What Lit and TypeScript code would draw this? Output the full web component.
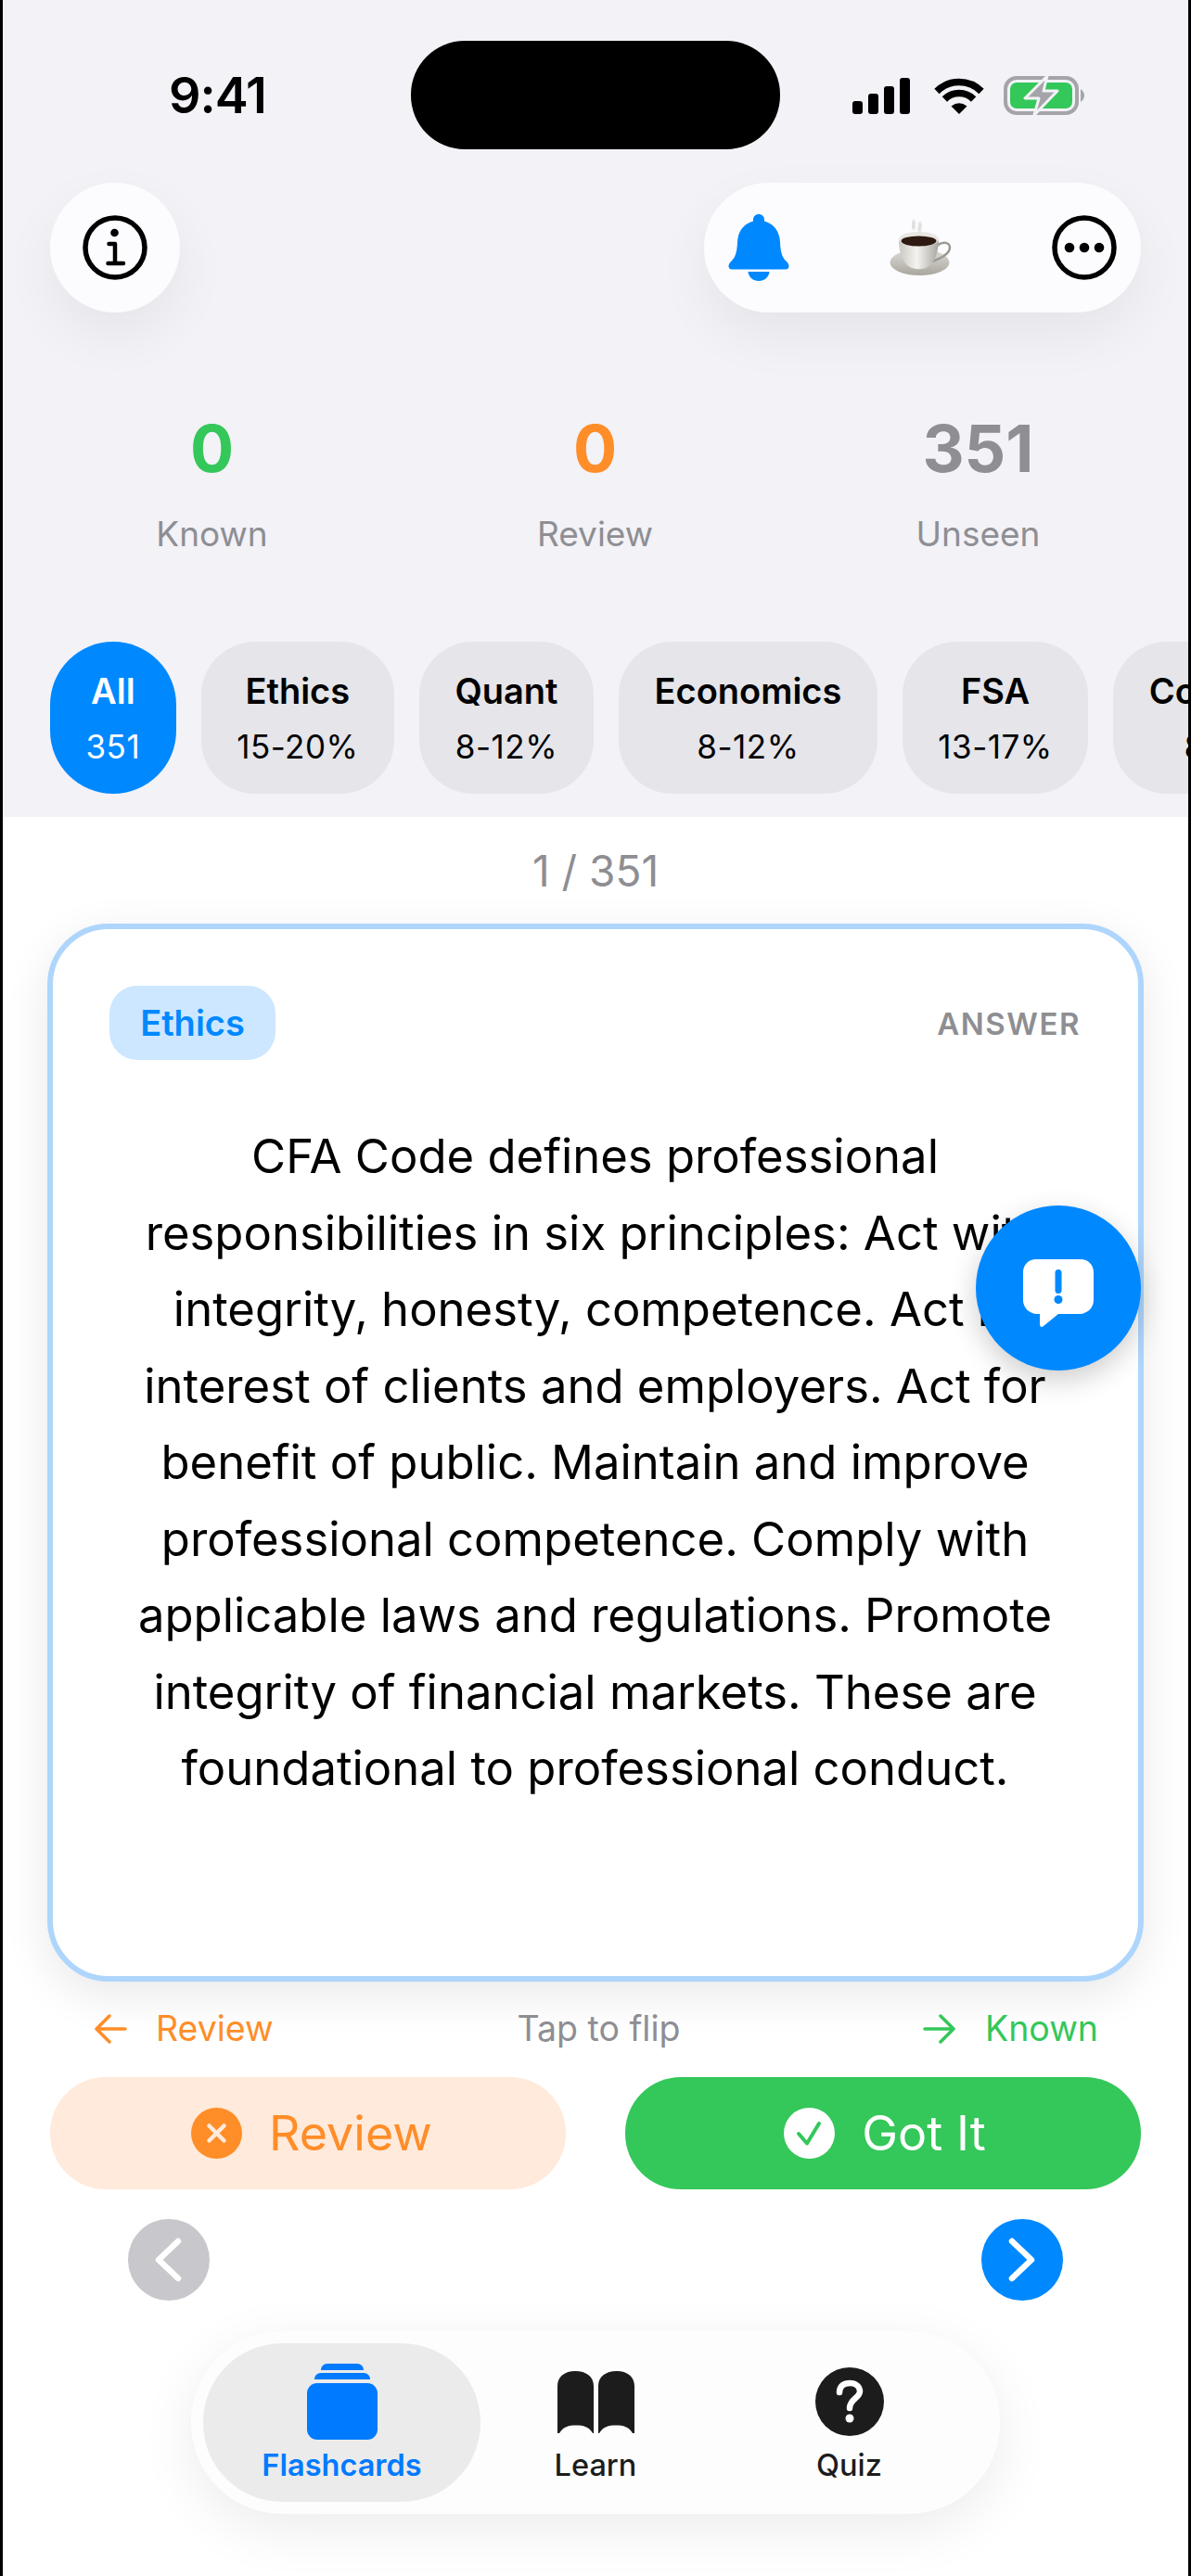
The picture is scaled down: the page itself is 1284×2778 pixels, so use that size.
import {LitElement, html, css, svg} from 'lit';
import {customElement} from 'lit/decorators.js';

const CHIPS = [
    {title: 'All', sub: '351', active: true},
    {title: 'Ethics', sub: '15-20%'},
    {title: 'Quant', sub: '8-12%'},
    {title: 'Economics', sub: '8-12%'},
    {title: 'FSA', sub: '13-17%'},
    {title: 'Corporate', sub: '8-12%'},
];

const STATS = [
    {value: '0', label: 'Known', tone: 'green'},
    {value: '0', label: 'Review', tone: 'orange'},
    {value: '351', label: 'Unseen', tone: 'gray'},
];

// the answer text wraps at fixed places in the reference
const ANSWER_LINES = [
    'CFA Code defines professional',
    'responsibilities in six principles: Act with',
    'integrity, honesty, competence. Act in',
    'interest of clients and employers. Act for',
    'benefit of public. Maintain and improve',
    'professional competence. Comply with',
    'applicable laws and regulations. Promote',
    'integrity of financial markets. These are',
    'foundational to professional conduct.',
];

const signalIcon = html`<svg width="62" height="40" viewBox="0 0 62 40">
    <rect x="0" y="26" width="11" height="14" rx="3"/>
    <rect x="17" y="18" width="11" height="22" rx="3"/>
    <rect x="34" y="10" width="11" height="30" rx="3"/>
    <rect x="51" y="1" width="11" height="39" rx="3"/>
</svg>`;

const wifiIcon = html`<svg class="wifi" width="54" height="40" viewBox="0 0 54 40">
    <path d="M3 15.500A34 34 0 0 1 51 15.500" fill="none" stroke="#000" stroke-width="7.500"/>
    <path d="M11.400 24A22 22 0 0 1 42.600 24" fill="none" stroke="#000" stroke-width="7.500"/>
    <path d="M27 40L18.500 31.500Q27 25 35.500 31.500Z"/>
</svg>`;

const batteryIcon = html`<svg width="88" height="44" viewBox="0 0 88 44">
    <rect x="2" y="3" width="77" height="38" rx="12" fill="none" stroke="#a4a4a9" stroke-width="4"/>
    <path d="M83 15Q87 18 87 22Q87 26 83 29Z" fill="#a4a4a9"/>
    <rect x="7" y="8" width="67" height="28" rx="7" fill="#34c759"/>
    <path d="M47 1L23 25H38L33 43L58 17H43Z" fill="#a4a4a9" stroke="#f2f2f7" stroke-width="3" stroke-linejoin="round"/>
</svg>`;

const infoIcon = html`<svg width="70" height="70" viewBox="0 0 70 70">
    <circle cx="35" cy="35" r="32" fill="none" stroke="#000" stroke-width="5.500"/>
    <circle cx="34.500" cy="19" r="4.300"/>
    <path d="M28.500 31H35V52M27.500 52H44" fill="none" stroke="#000" stroke-width="4.500" stroke-linecap="round" stroke-linejoin="round"/>
</svg>`;

const bellIcon = html`<svg width="66" height="72" viewBox="0 0 65 72" fill="#0088ff">
    <path d="M32.500 0C29 0 26.500 2.500 26.500 6V7.500C15 10.500 10 20 9.500 30C9 42 7 47 2.500 51C.5 53 0 55 0 56C0 58.500 1.500 59.500 4 59.500H61C63.500 59.500 65 58.500 65 56C65 55 64.500 53 62.500 51C58 47 56 42 55.500 30C55 20 50 10.500 38.500 7.500V6C38.500 2.500 36 0 32.500 0Z"/>
    <path d="M21 62H44C43.500 68 38.500 72 32.500 72C26.500 72 21.500 68 21 62Z"/>
</svg>`;

const coffeeIcon = html`<svg width="70" height="64" viewBox="0 0 70 64">
    <defs>
        <linearGradient id="saucer" x1="0" y1="0" x2="0" y2="1">
            <stop offset="0" stop-color="#dedcd6"/>
            <stop offset="1" stop-color="#a9a69e"/>
        </linearGradient>
        <linearGradient id="cup" x1="0" y1="0" x2="1" y2="0">
            <stop offset="0" stop-color="#c9c7c1"/>
            <stop offset=".45" stop-color="#f4f3ef"/>
            <stop offset="1" stop-color="#a8a69f"/>
        </linearGradient>
        <filter id="steam"><feGaussianBlur stdDeviation="1"/></filter>
    </defs>
    <ellipse cx="33.500" cy="48" rx="32" ry="14" fill="url(#saucer)"/>
    <path d="M52 30C58 25 66 26 66 32C66 38 58 43 47 47" fill="none" stroke="#9a9891" stroke-width="2.500"/>
    <path d="M11 23C11 38 16 52 27 54.500C31 55.500 37 55.500 41 53.500C49 50 54 38 54 23Z" fill="url(#cup)"/>
    <ellipse cx="32.500" cy="23" rx="21.500" ry="8" fill="#e9e7e2"/>
    <ellipse cx="32.500" cy="25" rx="19" ry="5.500" fill="#2e1a10"/>
    <path d="M26 3C30 6 23 9 28 12M33 5C37 8 31 11 34 15" fill="none" stroke="#cfcfcf" stroke-width="2.500" filter="url(#steam)"/>
</svg>`;

const moreIcon = html`<svg width="70" height="70" viewBox="0 0 70 70">
    <circle cx="35" cy="35" r="32" fill="none" stroke="#000" stroke-width="5.500"/>
    <circle cx="19" cy="35" r="5.300"/>
    <circle cx="35" cy="35" r="5.300"/>
    <circle cx="51" cy="35" r="5.300"/>
</svg>`;

const bubbleIcon = html`<svg width="76" height="74" viewBox="0 0 76 74">
    <path d="M14 0H62C70 0 76 6 76 14V44C76 52 70 58 62 59H38L22 72C20 74 18 73 18 70V59H14C6 58 0 52 0 44V14C0 6 6 0 14 0Z" fill="#fff"/>
    <rect x="34.500" y="11" width="7" height="26" rx="3.500" fill="#0088ff"/>
    <circle cx="38" cy="43.500" r="4.500" fill="#0088ff"/>
</svg>`;

const arrowIcon = (flip: boolean) => html`<svg class=${flip ? 'flip' : ''} width="36" height="32" viewBox="0 0 36 32">
    <path d="M34 16H3M17 2L3 16L17 30" fill="none" stroke="currentColor" stroke-width="3.500" stroke-linecap="round" stroke-linejoin="round"/>
</svg>`;

const crossIcon = html`<svg width="55" height="55" viewBox="0 0 55 55">
    <circle cx="27.500" cy="27.500" r="27.500" fill="#ff8d28"/>
    <path d="M19.500 19.500L35.500 35.500M35.500 19.500L19.500 35.500" stroke="#ffeadb" stroke-width="4.500" stroke-linecap="round"/>
</svg>`;

const checkIcon = html`<svg width="55" height="55" viewBox="0 0 55 55">
    <circle cx="27.500" cy="27.500" r="27.500" fill="#fff"/>
    <path d="M16 28L25 38.500L38 17" fill="none" stroke="#34c759" stroke-width="4" stroke-linecap="round" stroke-linejoin="round"/>
</svg>`;

const chevron = (right: boolean) => svg`<svg width="88" height="88" viewBox="0 0 88 88">
    <path d=${right ? 'M33 24L54 44L33 64' : 'M54 24L33 44L54 64'} fill="none" stroke="#fff" stroke-width="6.500" stroke-linecap="round" stroke-linejoin="round"/>
</svg>`;

const cardsIcon = html`<svg width="76" height="82" viewBox="0 0 76 82" fill="#007aff">
    <path d="M15 7C15 3 18 0 22 0H54C58 0 61 3 61 7H15Z"/>
    <path d="M8 17C8 13 11 10 15 10H61C65 10 68 13 68 17H8Z"/>
    <rect x="0" y="21" width="76" height="61" rx="11"/>
</svg>`;

const bookIcon = html`<svg width="83" height="67" viewBox="0 0 83 67" fill="#1c1c1c">
    <path d="M0 16C0 6 8 0 19 0C31 0 39 6 39 16V67H38C34 60 28 58.500 20 58.500C12 58.500 6 60 2 67H0Z"/>
    <path d="M83 16C83 6 75 0 64 0C52 0 44 6 44 16V67H45C49 60 55 58.500 63 58.500C71 58.500 77 60 81 67H83Z"/>
</svg>`;

const quizIcon = html`<svg width="74" height="74" viewBox="0 0 74 74">
    <circle cx="37" cy="37" r="37" fill="#1c1c1c"/>
    <path d="M26 27C26 20 31 17 37 17C44 17 48 21 48 26C48 33 37 34 37 44" fill="none" stroke="#fff" stroke-width="6.500" stroke-linecap="round"/>
    <circle cx="37" cy="55" r="4.500" fill="#fff"/>
</svg>`;

@customElement('app-root')
export class AppRoot extends LitElement {
    static styles = css`
        :host {
            display: block;
            width: 1284px;
            height: 2778px;
            background: #fff;
            font-family: Inter, "Liberation Sans", sans-serif;
            color: #000;
        }

        .screen {
            position: relative;
            box-sizing: border-box;
            width: 100%;
            height: 100%;
            border-left: 3px solid #000;
            border-right: 3px solid #000;
            overflow: hidden;
        }

        svg {
            display: block;
            flex: none;
        }

        .flip {
            transform: scaleX(-1);
        }

        /* top grey area */
        .head {
            background: #f2f2f7;
            padding: 44px 0 25px;
        }

        .status {
            display: grid;
            grid-template-columns: 440px 398px 1fr;
            height: 117px;
            align-items: center;
        }

        .time {
            padding-left: 179px;
            font-size: 54px;
            font-weight: 600;
            letter-spacing: -1px;
        }

        .island {
            height: 117px;
            border-radius: 58px;
            background: #000;
        }

        .status-icons {
            display: flex;
            align-items: center;
            padding-left: 78px;
            gap: 24px;
        }

        .wifi {
            margin: 0 -3px 0 2px;
        }

        .toolbar {
            display: flex;
            justify-content: space-between;
            margin-top: 36px;
            padding: 0 51px;
        }

        .round,
        .pill {
            height: 140px;
            background: #fcfcfe;
            border-radius: 70px;
            box-shadow: 0 24px 60px rgba(0, 0, 0, 0.06);
        }

        .round {
            width: 140px;
            display: flex;
            align-items: center;
            justify-content: center;
        }

        .pill {
            width: 471px;
            box-sizing: border-box;
            display: flex;
            align-items: center;
            justify-content: space-between;
            padding: 0 26px;
        }

        .stats {
            display: grid;
            grid-template-columns: repeat(3, 413px);
            margin-top: 112px;
            padding-left: 19px;
            text-align: center;
        }

        .stat-value {
            font-size: 70px;
            line-height: 70px;
            font-weight: 700;
        }

        .stat-label {
            margin-top: 34px;
            font-size: 37px;
            line-height: 46px;
            color: #8e8e93;
        }

        .green { color: #34c759; }
        .orange { color: #ff8d28; }
        .gray { color: #8e8e93; }

        .chips {
            display: flex;
            gap: 27px;
            margin-top: 93px;
            padding-left: 51px;
            overflow: hidden;
        }

        .chip {
            flex: none;
            height: 164px;
            box-sizing: border-box;
            padding: 0 38.500px;
            border-radius: 58px;
            background: #e5e5ea;
            display: flex;
            flex-direction: column;
            align-items: center;
            justify-content: center;
            gap: 18px;
        }

        .chip.active {
            background: #0088ff;
            color: #fff;
            border-radius: 68px;
        }

        .chip-title {
            font-size: 38px;
            line-height: 44px;
            font-weight: 600;
        }

        .chip-sub {
            font-size: 35px;
            line-height: 40px;
            letter-spacing: 0.5px;
        }

        /* card area */
        .counter {
            height: 115px;
            display: flex;
            align-items: center;
            justify-content: center;
            font-size: 46px;
            color: #8e8e93;
        }

        .card {
            box-sizing: border-box;
            margin: 0 48px;
            height: 1141px;
            padding: 61px 62px 0 61px;
            background: #fff;
            border: 6px solid #aed6fc;
            border-radius: 66px;
            box-shadow: 0 14px 50px rgba(0, 0, 0, 0.09);
        }

        .card-top {
            display: flex;
            justify-content: space-between;
            align-items: center;
        }

        .tag {
            height: 80px;
            width: 179px;
            display: flex;
            align-items: center;
            justify-content: center;
            border-radius: 30px;
            background: #cce7ff;
            color: #0088ff;
            font-size: 38px;
            font-weight: 600;
        }

        .side {
            font-size: 33px;
            font-weight: 600;
            letter-spacing: 1.5px;
            color: #8e8e93;
            padding-top: 2px;
        }

        .answer {
            margin: 63px 0 0 0;
            text-align: center;
            font-size: 50.800px;
            line-height: 82.5px;
        }

        .answer span {
            display: block;
            white-space: nowrap;
        }

        .hints {
            display: grid;
            grid-template-columns: 1fr auto 1fr;
            align-items: center;
            height: 103px;
            padding: 0 97px 2px 98px;
            box-sizing: border-box;
            font-size: 37.500px;
        }

        .hint {
            display: flex;
            align-items: center;
            gap: 31px;
        }

        .hint.right {
            justify-content: flex-end;
        }

        .tap {
            color: #8e8e93;
            padding-left: 6px;
        }

        .actions {
            display: grid;
            grid-template-columns: 556px 556px;
            gap: 64px;
            padding: 0 51px;
        }

        .action {
            height: 121px;
            box-sizing: border-box;
            border-radius: 60px;
            display: flex;
            align-items: center;
            justify-content: center;
            gap: 29px;
            font-size: 52px;
        }

        .action.later {
            background: #ffeadb;
            color: #ff8d28;
            padding-left: 8px;
        }

        .action.got {
            background: #34c759;
            color: #fff;
            padding-left: 4px;
        }

        .pager {
            display: flex;
            justify-content: space-between;
            margin-top: 32px;
            padding: 0 135px;
        }

        .page-btn {
            width: 88px;
            height: 88px;
            border-radius: 50%;
            background: #0088ff;
        }

        .page-btn.off {
            background: #c7c7cc;
        }

        /* bottom tabs */
        .tabbar {
            display: grid;
            grid-template-columns: 299px 248px 299px;
            width: 872px;
            box-sizing: border-box;
            height: 197px;
            margin: 33px auto 0;
            padding: 13px;
            background: #fdfdfd;
            border-radius: 98px;
            box-shadow: 0 16px 60px rgba(0, 0, 0, 0.08);
        }

        .tab {
            display: flex;
            flex-direction: column;
            align-items: center;
            color: #1c1c1c;
            font-size: 32.500px;
            line-height: 38px;
            font-weight: 500;
        }

        .tab.active {
            color: #007aff;
            font-weight: 600;
            background: #ebebeb;
            border-radius: 85px;
        }

        .tab-icon {
            height: 113px;
            box-sizing: border-box;
            padding-top: 13px;
            display: flex;
            align-items: center;
        }

        /* floating report button */
        .fab {
            position: absolute;
            left: 1049px;
            top: 1300px;
            width: 178px;
            height: 178px;
            border-radius: 50%;
            background: #0088ff;
            box-shadow: 0 10px 30px rgba(0, 0, 0, 0.2);
            display: flex;
            align-items: center;
            justify-content: center;
            padding-top: 12px;
            box-sizing: border-box;
        }
    `;

    render() {
        return html`
            <div class="screen">
                <div class="head">
                    <div class="status">
                        <div class="time">9:41</div>
                        <div class="island"></div>
                        <div class="status-icons">${signalIcon}${wifiIcon}${batteryIcon}</div>
                    </div>
                    <div class="toolbar">
                        <div class="round">${infoIcon}</div>
                        <div class="pill">${bellIcon}${coffeeIcon}${moreIcon}</div>
                    </div>
                    <div class="stats">
                        ${STATS.map((s) => html`
                            <div>
                                <div class="stat-value ${s.tone}">${s.value}</div>
                                <div class="stat-label">${s.label}</div>
                            </div>
                        `)}
                    </div>
                    <div class="chips">
                        ${CHIPS.map((c) => html`
                            <div class="chip ${c.active ? 'active' : ''}">
                                <div class="chip-title">${c.title}</div>
                                <div class="chip-sub">${c.sub}</div>
                            </div>
                        `)}
                    </div>
                </div>

                <div class="counter">1 / 351</div>

                <div class="card">
                    <div class="card-top">
                        <div class="tag">Ethics</div>
                        <div class="side">ANSWER</div>
                    </div>
                    <p class="answer">${ANSWER_LINES.map((l) => html`<span>${l}</span>`)}</p>
                </div>

                <div class="hints">
                    <div class="hint orange">${arrowIcon(false)}Review</div>
                    <div class="tap">Tap to flip</div>
                    <div class="hint right green">${arrowIcon(true)}Known</div>
                </div>

                <div class="actions">
                    <div class="action later">${crossIcon}Review</div>
                    <div class="action got">${checkIcon}Got It</div>
                </div>

                <div class="pager">
                    <div class="page-btn off">${chevron(false)}</div>
                    <div class="page-btn">${chevron(true)}</div>
                </div>

                <div class="tabbar">
                    <div class="tab active"><div class="tab-icon">${cardsIcon}</div>Flashcards</div>
                    <div class="tab"><div class="tab-icon">${bookIcon}</div>Learn</div>
                    <div class="tab"><div class="tab-icon">${quizIcon}</div>Quiz</div>
                </div>

                <div class="fab">${bubbleIcon}</div>
            </div>
        `;
    }
}
